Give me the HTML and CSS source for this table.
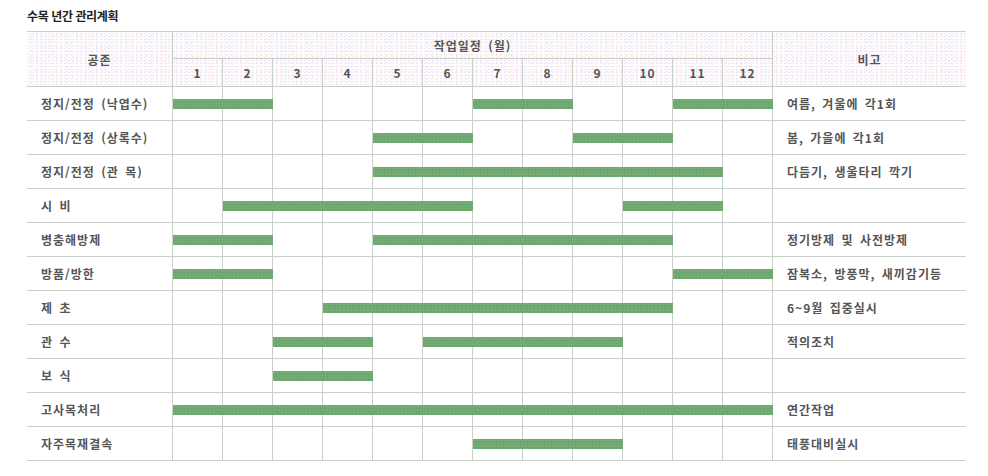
FILE: index.html
```html
<!DOCTYPE html>
<html lang="ko">
<head>
<meta charset="utf-8">
<title>수목 년간 관리계획</title>
<link rel="stylesheet" href="styles.css">
</head>
<body>
<h1 class="title">수목 년간 관리계획</h1>
<div class="chart">
  <div class="head">
    <div class="h-name">공존</div>
    <div class="h-months">
      <div class="h-title">작업일정 (월)</div>
      <div class="h-nums">
        <span>1</span><span>2</span><span>3</span><span>4</span><span>5</span><span>6</span><span>7</span><span>8</span><span>9</span><span>10</span><span>11</span><span>12</span>
      </div>
    </div>
    <div class="h-note">비고</div>
  </div>

  <div class="row">
    <div class="name">정지/전정 (낙엽수)</div>
    <div class="track"><i class="bar" style="grid-column:1/3"></i><i class="bar" style="grid-column:7/9"></i><i class="bar" style="grid-column:11/13"></i></div>
    <div class="note">여름, 겨울에 각1회</div>
  </div>
  <div class="row">
    <div class="name">정지/전정 (상록수)</div>
    <div class="track"><i class="bar" style="grid-column:5/7"></i><i class="bar" style="grid-column:9/11"></i></div>
    <div class="note">봄, 가을에 각1회</div>
  </div>
  <div class="row">
    <div class="name">정지/전정 (관 목)</div>
    <div class="track"><i class="bar" style="grid-column:5/12"></i></div>
    <div class="note">다듬기, 생울타리 깍기</div>
  </div>
  <div class="row">
    <div class="name">시 비</div>
    <div class="track"><i class="bar" style="grid-column:2/7"></i><i class="bar" style="grid-column:10/12"></i></div>
    <div class="note"></div>
  </div>
  <div class="row">
    <div class="name">병충해방제</div>
    <div class="track"><i class="bar" style="grid-column:1/3"></i><i class="bar" style="grid-column:5/11"></i></div>
    <div class="note">정기방제 및 사전방제</div>
  </div>
  <div class="row">
    <div class="name">방품/방한</div>
    <div class="track"><i class="bar" style="grid-column:1/3"></i><i class="bar" style="grid-column:11/13"></i></div>
    <div class="note">잠복소, 방풍막, 새끼감기등</div>
  </div>
  <div class="row">
    <div class="name">제 초</div>
    <div class="track"><i class="bar" style="grid-column:4/11"></i></div>
    <div class="note">6~9월 집중실시</div>
  </div>
  <div class="row">
    <div class="name">관 수</div>
    <div class="track"><i class="bar" style="grid-column:3/5"></i><i class="bar" style="grid-column:6/10"></i></div>
    <div class="note">적의조치</div>
  </div>
  <div class="row">
    <div class="name">보 식</div>
    <div class="track"><i class="bar" style="grid-column:3/5"></i></div>
    <div class="note"></div>
  </div>
  <div class="row">
    <div class="name">고사목처리</div>
    <div class="track"><i class="bar" style="grid-column:1/13"></i></div>
    <div class="note">연간작업</div>
  </div>
  <div class="row">
    <div class="name">자주목재결속</div>
    <div class="track"><i class="bar" style="grid-column:7/10"></i></div>
    <div class="note">태풍대비실시</div>
  </div>
</div>
</body>
</html>
```

FILE: styles.css
```css
* { box-sizing: border-box; }

body {
  margin: 0;
  padding: 8px 0 0 27px;
  background: #fff;
  font-family: "Noto Sans CJK KR", "Noto Sans", sans-serif;
  font-size: 12px;
  color: #555;
}

.title {
  margin: 0 0 7px;
  height: 16px;
  line-height: 16px;
  font-size: 12px;
  font-weight: 600;
  letter-spacing: -0.4px;
  color: #222;
}

.chart {
  width: 939px;
  border-top: 1px solid #c9cfc9;
  font-weight: 700;
  letter-spacing: 1px;
  word-spacing: 2px;
}

.head {
  display: flex;
  height: 55px;
  border-bottom: 1px solid #c9cfc9;
  background:
    radial-gradient(circle, #f8e0f5 0.5px, transparent 0.8px) 0 0 / 4px 3px,
    radial-gradient(circle, #dcf1f6 0.5px, transparent 0.8px) 2px 1px / 5px 4px,
    radial-gradient(circle, #f7f3d3 0.5px, transparent 0.8px) 1px 2px / 6px 5px,
    #fefcfe;
}

.h-name {
  width: 146px;
  border-right: 1px solid #c9cfc9;
  display: flex;
  align-items: center;
  justify-content: center;
}

.h-months {
  width: 600px;
  border-right: 1px solid #c9cfc9;
  display: flex;
  flex-direction: column;
}

.h-title {
  height: 27px;
  border-bottom: 1px solid #c9cfc9;
  display: flex;
  align-items: center;
  justify-content: center;
}

.h-nums {
  flex: 1;
  display: grid;
  grid-template-columns: repeat(11, 50px) 49px;
}

.h-nums span {
  display: flex;
  align-items: center;
  justify-content: center;
  border-right: 1px solid #c9cfc9;
}

.h-nums span:last-child { border-right: 0; }

.h-note {
  flex: 1;
  display: flex;
  align-items: center;
  justify-content: center;
}

.row {
  display: flex;
  height: 34px;
  border-bottom: 1px solid #c9cfc9;
}

.name {
  width: 146px;
  border-right: 1px solid #c9cfc9;
  display: flex;
  align-items: center;
  padding-left: 14px;
}

.track {
  width: 600px;
  display: grid;
  grid-template-columns: repeat(12, 50px);
  grid-template-rows: 33px;
  background: repeating-linear-gradient(90deg, transparent 0 49px, #c9cfc9 49px 50px);
}

.bar {
  grid-row: 1;
  align-self: start;
  margin-top: 12px;
  height: 10px;
  background:
    radial-gradient(circle, #86b86c 0.6px, transparent 1px) 0 0 / 3px 3px,
    radial-gradient(circle, #65a07c 0.6px, transparent 1px) 1px 1px / 4px 5px,
    #70a872;
}

.note {
  flex: 1;
  display: flex;
  align-items: center;
  padding-left: 14px;
}
```
